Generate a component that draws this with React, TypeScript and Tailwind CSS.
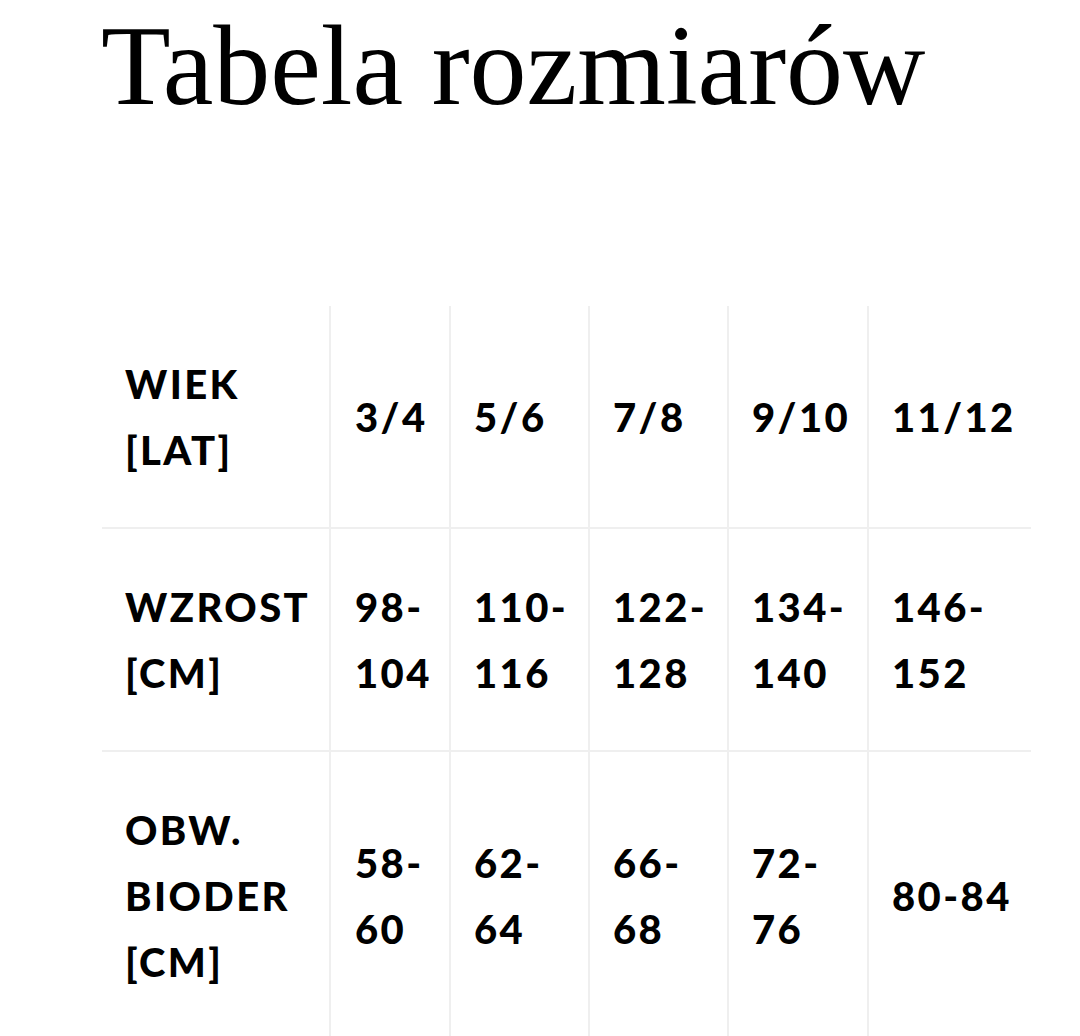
import React from "react";

const rows: string[][][] = [
  [["WIEK", "[LAT]"], ["3/4"], ["5/6"], ["7/8"], ["9/10"], ["11/12"]],
  [["WZROST", "[CM]"], ["98-", "104"], ["110-", "116"], ["122-", "128"], ["134-", "140"], ["146-", "152"]],
  [["OBW.", "BIODER", "[CM]"], ["58-", "60"], ["62-", "64"], ["66-", "68"], ["72-", "76"], ["80-84"]],
];

const colW = ["w-[229px]", "w-[120px]", "w-[139px]", "w-[139px]", "w-[140px]", "w-[162px]"];
const colPad = ["pl-[23px]", "pl-[24px]", "pl-[23px]", "pl-[23px]", "pl-[23px]", "pl-[23px]"];

export default function App() {
  return (
    <div className="min-h-[1036px] h-[1036px] overflow-hidden bg-white pl-[102px] pr-[49px]">
      <h1 className="mt-[9px] text-[114px] leading-[114px] text-black font-normal [font-family:'Liberation_Serif',serif] -ml-[1px]">
        Tabela rozmiarów
      </h1>
      <div className="mt-[183px] flex flex-col [font-family:Lato,'Liberation_Sans',sans-serif] font-black text-[40px] leading-[66px] tracking-[0.06em] text-black">
        {rows.map((row, ri) => (
          <div
            key={ri}
            className={
              "flex " + (ri < rows.length - 1 ? "border-b-2 border-[#efefef]" : "")
            }
          >
            {row.map((cell, ci) => (
              <div
                key={ci}
                className={
                  colW[ci] +
                  " " +
                  colPad[ci] +
                  " flex flex-col justify-center pt-[45px] pb-[44px] " +
                  (ci < row.length - 1 ? "border-r-2 border-[#efefef]" : "")
                }
              >
                {cell.map((line, li) => (
                  <div key={li} className="whitespace-nowrap">
                    {line}
                  </div>
                ))}
              </div>
            ))}
          </div>
        ))}
      </div>
    </div>
  );
}
